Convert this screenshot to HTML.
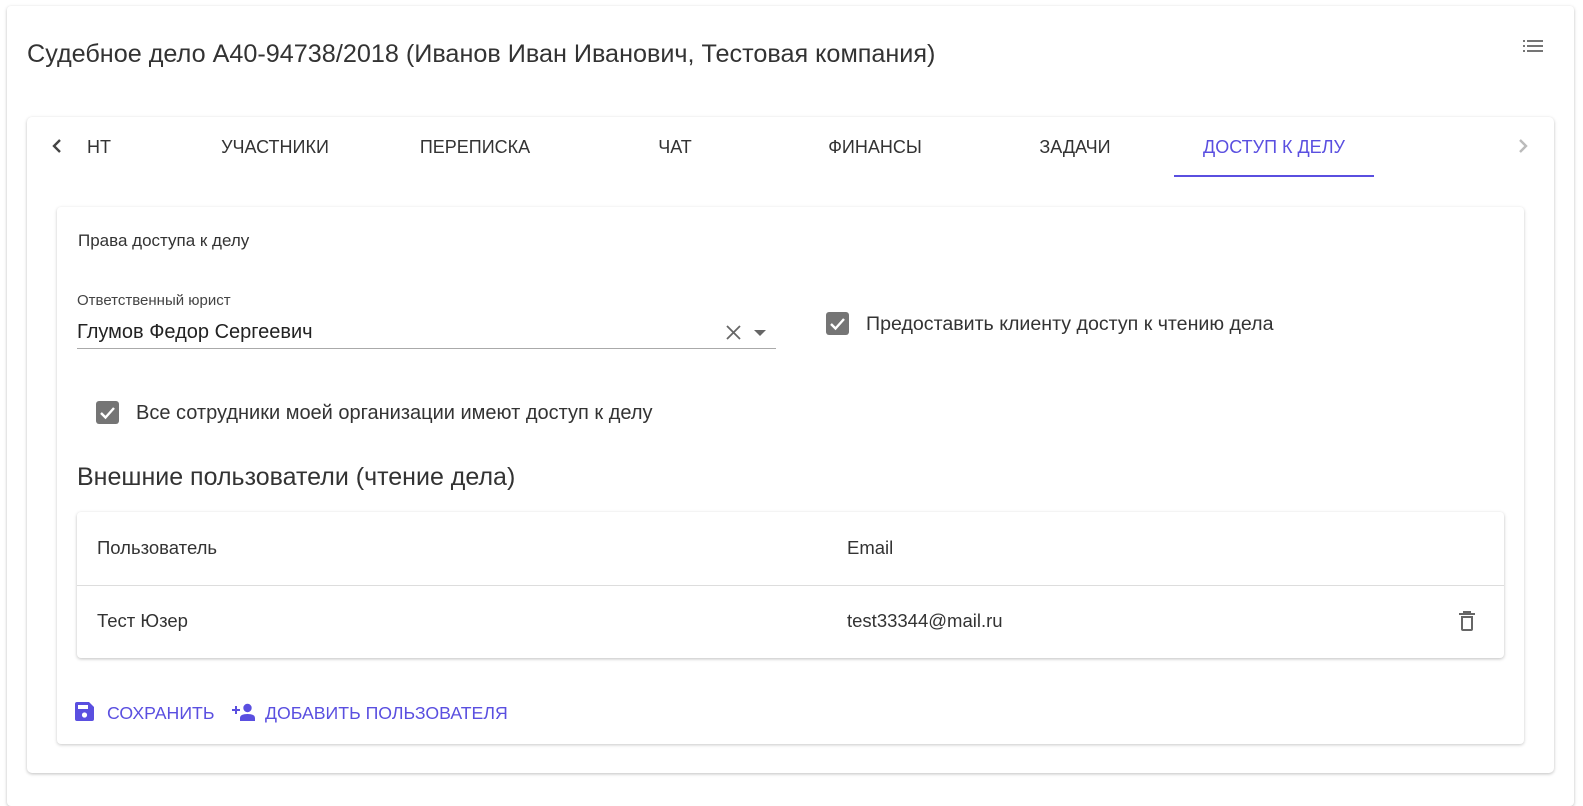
<!DOCTYPE html>
<html><head><meta charset="utf-8">
<style>
*{box-sizing:border-box;margin:0;padding:0}
body{width:1583px;height:782px;overflow:hidden;background:#fff;font-family:"Liberation Sans",sans-serif;color:#333;position:relative}
.abs{position:absolute}
.outer{left:7px;top:6px;width:1567px;height:800px;background:#fff;border-radius:4px;box-shadow:0 1px 3px rgba(0,0,0,.25)}
.tabcard{left:27px;top:117px;width:1527px;height:656px;background:#fff;border-radius:5px;box-shadow:0 1px 3px rgba(0,0,0,.25)}
.inner{left:57px;top:207px;width:1467px;height:537px;background:#fff;border-radius:4px;box-shadow:0 1px 3px rgba(0,0,0,.22)}
.table{left:77px;top:512px;width:1427px;height:146px;background:#fff;border-radius:4px;box-shadow:0 1px 3px rgba(0,0,0,.25)}
.tab{top:135px;font-size:18px;color:#333;width:200px;text-align:center;line-height:24px}
.cb{width:23px;height:23px;background:#757575;border-radius:3px}
.t{white-space:nowrap}
.p{color:#5a4fe0}
</style></head><body>
<div class="abs outer"></div>
<div class="abs t" style="left:27px;top:38px;font-size:25.2px;color:#333;line-height:32px">Судебное дело А40-94738/2018 (Иванов Иван Иванович, Тестовая компания)</div>
<svg class="abs" style="left:1520px;top:36px" width="28" height="24" viewBox="0 0 28 24"><g fill="#757575"><rect x="3" y="4" width="2" height="2"/><rect x="7" y="4" width="16" height="2"/><rect x="3" y="9" width="2" height="2"/><rect x="7" y="9" width="16" height="2"/><rect x="3" y="14" width="2" height="2"/><rect x="7" y="14" width="16" height="2"/></g></svg>

<div class="abs tabcard"></div>
<svg class="abs" style="left:48px;top:136px" width="18" height="20" viewBox="0 0 18 20"><path d="M12 4 L6 10 L12 16" stroke="#444" stroke-width="2.4" fill="none"/></svg>
<div class="abs t" style="left:87px;top:135px;font-size:18px;line-height:24px">НТ</div>
<div class="abs tab" style="left:175px">УЧАСТНИКИ</div>
<div class="abs tab" style="left:375px">ПЕРЕПИСКА</div>
<div class="abs tab" style="left:575px">ЧАТ</div>
<div class="abs tab" style="left:775px">ФИНАНСЫ</div>
<div class="abs tab" style="left:975px">ЗАДАЧИ</div>
<div class="abs tab p" style="left:1174px">ДОСТУП К ДЕЛУ</div>
<div class="abs" style="left:1174px;top:175px;width:200px;height:2px;background:#5a4fe0"></div>
<svg class="abs" style="left:1514px;top:136px" width="18" height="20" viewBox="0 0 18 20"><path d="M6 4 L12 10 L6 16" stroke="#bbb" stroke-width="2.4" fill="none"/></svg>

<div class="abs inner"></div>
<div class="abs t" style="left:78px;top:231px;font-size:17px;line-height:20px">Права доступа к делу</div>
<div class="abs t" style="left:77px;top:292px;font-size:15px;line-height:18px;color:#444">Ответственный юрист</div>
<div class="abs t" style="left:77px;top:320px;font-size:20px;line-height:24px;color:#222">Глумов Федор Сергеевич</div>
<svg class="abs" style="left:725px;top:324px" width="18" height="18" viewBox="0 0 18 18"><path d="M2 2 L15 15 M15 2 L2 15" stroke="#666" stroke-width="1.8"/></svg>
<svg class="abs" style="left:752px;top:328px" width="16" height="10" viewBox="0 0 16 10"><path d="M2 2 L14 2 L8 8Z" fill="#666"/></svg>
<div class="abs" style="left:77px;top:348px;width:699px;height:1px;background:#aaa"></div>

<div class="abs cb" style="left:826px;top:312px"></div>
<svg class="abs" style="left:826px;top:312px" width="23" height="23" viewBox="0 0 23 23"><path d="M5 12 L9.5 16.5 L18 7" stroke="#fff" stroke-width="2.4" fill="none"/></svg>
<div class="abs t" style="left:866px;top:312px;font-size:19.6px;line-height:24px;color:#333">Предоставить клиенту доступ к чтению дела</div>

<div class="abs cb" style="left:96px;top:401px"></div>
<svg class="abs" style="left:96px;top:401px" width="23" height="23" viewBox="0 0 23 23"><path d="M5 12 L9.5 16.5 L18 7" stroke="#fff" stroke-width="2.4" fill="none"/></svg>
<div class="abs t" style="left:136px;top:401px;font-size:20px;line-height:24px;color:#333">Все сотрудники моей организации имеют доступ к делу</div>

<div class="abs t" style="left:77px;top:462px;font-size:25px;line-height:30px;color:#333">Внешние пользователи (чтение дела)</div>

<div class="abs table"></div>
<div class="abs t" style="left:97px;top:537px;font-size:18.5px;line-height:22px;color:#333">Пользователь</div>
<div class="abs t" style="left:847px;top:537px;font-size:18.5px;line-height:22px;color:#333">Email</div>
<div class="abs" style="left:77px;top:585px;width:1427px;height:1px;background:#ddd"></div>
<div class="abs t" style="left:97px;top:610px;font-size:18.5px;line-height:22px;color:#333">Тест Юзер</div>
<div class="abs t" style="left:847px;top:610px;font-size:18.5px;line-height:22px;color:#333">test33344@mail.ru</div>
<svg class="abs" style="left:1458px;top:610px" width="18" height="22" viewBox="0 0 18 22"><path d="M5 1 H13 V3 H17 V5 H1 V3 H5Z" fill="#666"/><path d="M3 6 H15 V19 Q15 21 13 21 H5 Q3 21 3 19Z M5 8 V19 H13 V8Z" fill="#666" fill-rule="evenodd"/></svg>

<svg class="abs" style="left:75px;top:702px" width="19" height="19" viewBox="0 0 19 19"><path d="M2 0 H14 L19 5 V17 Q19 19 17 19 H2 Q0 19 0 17 V2 Q0 0 2 0Z" fill="#5a4fe0"/><rect x="3" y="3" width="10" height="4" fill="#fff"/><circle cx="9.5" cy="13" r="2.6" fill="#fff"/></svg>
<div class="abs t p" style="left:107px;top:702px;font-size:17.7px;line-height:22px">СОХРАНИТЬ</div>
<svg class="abs" style="left:231px;top:703px" width="26" height="18" viewBox="0 0 26 18"><path d="M1 7 H9 M5 3 V11" stroke="#5a4fe0" stroke-width="2"/><circle cx="16.5" cy="5" r="4.2" fill="#5a4fe0"/><path d="M9 18 V15 Q9 11 16.5 11 Q24 11 24 15 V18Z" fill="#5a4fe0"/></svg>
<div class="abs t p" style="left:265px;top:702px;font-size:17.7px;line-height:22px">ДОБАВИТЬ ПОЛЬЗОВАТЕЛЯ</div>
</body></html>
